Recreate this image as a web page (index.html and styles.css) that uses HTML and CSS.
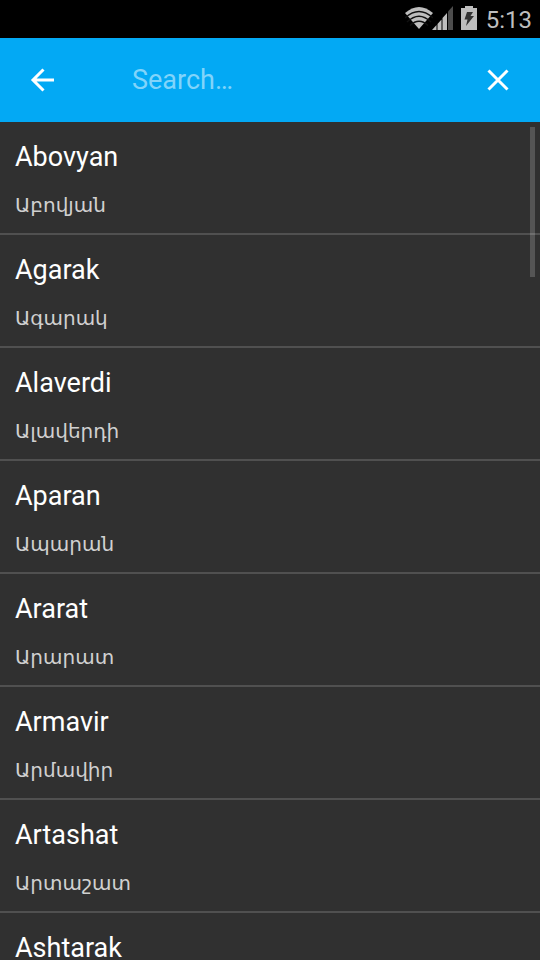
FILE: index.html
```html
<!DOCTYPE html>
<html lang="en">
<head>
<meta charset="utf-8">
<meta name="viewport" content="width=device-width, initial-scale=1">
<title>Cities</title>
<link rel="stylesheet" href="styles.css">
</head>
<body>
<div class="status">
  <svg class="wifi" viewBox="0 0 28 22" aria-hidden="true">
    <path class="fill" d="M14 22 0 6Q14 -6 28 6Z"/>
    <path class="gap" d="M0 11Q14 -2 28 11M2 15Q14 3.500 26 15M5 18.500Q14 10 23 18.500"/>
  </svg>
  <svg class="signal" viewBox="0 0 22 24" aria-hidden="true">
    <path class="dim" d="M16 5.500 21 0V24H16Z"/>
    <path class="fill" d="M0 24 4.500 19V24ZM5.500 24V18L9.500 13.500V24ZM10.500 24V12L15 7V24Z"/>
  </svg>
  <svg class="battery" viewBox="0 0 16 24" aria-hidden="true">
    <path class="fill" d="M4 0H12V2H16V24H0V2H4Z"/>
    <path class="bolt" d="M6 6H12L9.500 10H13L5 20 6.500 13.500H3.500Z"/>
  </svg>
  <time class="clock">5:13</time>
</div>
<header class="bar">
  <button class="icon-button" type="button" aria-label="Back">
    <svg class="icon" viewBox="0 0 36 36" aria-hidden="true"><path d="M30 18H9M19.500 7.500 9 18 19.500 28.500"/></svg>
  </button>
  <input class="search" type="text" placeholder="Search…" aria-label="Search">
  <button class="icon-button" type="button" aria-label="Clear">
    <svg class="icon" viewBox="0 0 36 36" aria-hidden="true"><path d="M8.500 8.500 27.500 27.500M27.500 8.500 8.500 27.500"/></svg>
  </button>
</header>
<main class="content">
  <ul class="list">
    <li class="item"><span class="name">Abovyan</span><span class="local" lang="hy">Աբովյան</span></li>
    <li class="item"><span class="name">Agarak</span><span class="local" lang="hy">Ագարակ</span></li>
    <li class="item"><span class="name">Alaverdi</span><span class="local" lang="hy">Ալավերդի</span></li>
    <li class="item"><span class="name">Aparan</span><span class="local" lang="hy">Ապարան</span></li>
    <li class="item"><span class="name">Ararat</span><span class="local" lang="hy">Արարատ</span></li>
    <li class="item"><span class="name">Armavir</span><span class="local" lang="hy">Արմավիր</span></li>
    <li class="item"><span class="name">Artashat</span><span class="local" lang="hy">Արտաշատ</span></li>
    <li class="item"><span class="name">Ashtarak</span></li>
  </ul>
  <div class="thumb"></div>
</main>
</body>
</html>
```
FILE: styles.css
```css
* { box-sizing: border-box; }
body {
  margin: 0;
  height: 100vh;
  display: flex;
  flex-direction: column;
  overflow: hidden;
  background: #303030;
  color: #fff;
  font-family: Roboto, "Noto Sans", "DejaVu Sans", sans-serif;
}
.status {
  flex: none;
  display: flex;
  justify-content: flex-end;
  align-items: flex-start;
  height: 38px;
  padding: 6px 8px 0 0;
  background: #000;
  color: #bebebe;
}
.wifi { width: 28px; height: 22px; margin: 1px -1px 0 0; }
.signal { width: 22px; height: 24px; }
.battery { width: 16px; height: 24px; margin: 0 9px 0 7px; }
.fill { fill: #bebebe; }
.dim { fill: #4c4c4c; }
.bolt { fill: #333; }
.gap { fill: none; stroke: #111; stroke-width: 1.5; }
.clock { font-size: 24px; line-height: 28px; }
.bar {
  flex: none;
  display: flex;
  align-items: center;
  height: 84px;
  background: #03a9f4;
}
.icon-button {
  flex: none;
  display: grid;
  place-items: center;
  width: 84px;
  height: 84px;
  padding: 0;
  border: 0;
  background: none;
}
.icon { width: 36px; height: 36px; fill: none; stroke: #fff; stroke-width: 3; }
.search {
  flex: 1;
  min-width: 0;
  padding: 0 0 0 48px;
  border: 0;
  outline: 0;
  background: none;
  color: #fff;
  font: 27px Roboto, sans-serif;
}
.search::placeholder { color: #81d4fa; opacity: 1; }
.content { position: relative; flex: 1; min-height: 0; overflow: hidden; }
.list { margin: 0; padding: 0; list-style: none; }
.item {
  display: flex;
  flex-direction: column;
  gap: 14px;
  padding: 16px 15px 13px;
  border-bottom: 2px solid #505050;
}
.name { font-size: 27px; line-height: 38px; }
.local { font-size: 20px; line-height: 30px; color: #d0d0d0; }
.thumb {
  position: absolute;
  top: 5px;
  right: 5px;
  width: 5px;
  height: 150px;
  background: rgba(255, 255, 255, 0.18);
}
```
